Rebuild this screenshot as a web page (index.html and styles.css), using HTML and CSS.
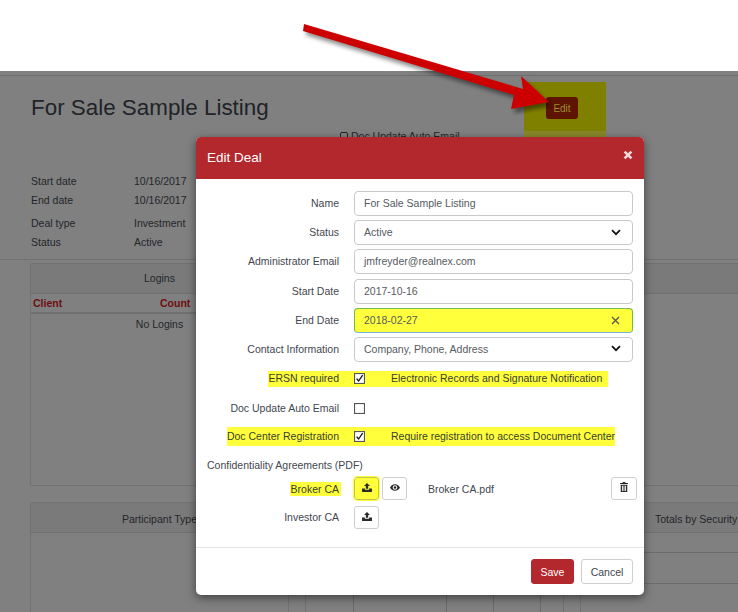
FILE: index.html
```html
<!DOCTYPE html>
<html lang="en">
<head>
<meta charset="utf-8">
<title>Edit Deal</title>
<link rel="stylesheet" href="styles.css">
</head>
<body>
<div class="topbar"></div>
<main class="page">
  <header class="head">
    <h1 class="title">For Sale Sample Listing</h1>
    <div class="auto-mail"><span class="mini-box"></span>Doc Update Auto Email</div>
  </header>
  <section class="meta">
    <div class="meta-group">
      <span>Start date</span><span>10/16/2017</span>
      <span>End date</span><span>10/16/2017</span>
    </div>
    <div class="meta-group">
      <span>Deal type</span><span>Investment</span>
      <span>Status</span><span>Active</span>
    </div>
  </section>
  <section class="panels panels-top">
    <article class="panel">
      <h2 class="panel-head">Logins</h2>
      <div class="table-head"><span>Client</span><span>Count</span></div>
      <p class="empty">No Logins</p>
    </article>
    <article class="panel"><div class="panel-head"></div></article>
    <article class="panel"><div class="panel-head"></div></article>
  </section>
  <section class="panels panels-bottom">
    <article class="panel"><h2 class="panel-head">Participant Type</h2></article>
    <article class="panel">
      <div class="panel-head"></div>
      <div class="rule-row"></div>
      <div class="rule-row rule-tall"></div>
      <div class="col-lines"><i></i><i></i><i></i><i></i></div>
    </article>
    <article class="panel">
      <h2 class="panel-head panel-head-left">Totals by Security</h2>
      <div class="rule-row"></div>
      <div class="rule-row rule-tall"></div>
    </article>
  </section>
</main>

<div class="edit-spot"><button class="edit-btn" type="button">Edit</button></div>

<svg class="arrow" viewBox="0 0 738 120" width="738" height="120" aria-hidden="true">
  <polygon points="304,24 303,31 514,95 511,109 549,102 521,76 523,89"/>
</svg>

<div class="modal" role="dialog" aria-label="Edit Deal">
  <div class="modal-head">
    <span class="modal-title">Edit Deal</span>
    <svg class="close" viewBox="0 0 10 10" width="10" height="10" aria-hidden="true"><path d="M1.6 1.6 8.4 8.4M8.4 1.6 1.6 8.4"/></svg>
  </div>
  <form class="modal-body">
    <div class="fields">
      <div class="row"><label class="lbl">Name</label><div class="field">For Sale Sample Listing</div></div>
      <div class="row"><label class="lbl">Status</label><div class="field">Active<svg class="chev" viewBox="0 0 10 7" width="10" height="7" aria-hidden="true"><path d="M1 1.2 5 5.2 9 1.2"/></svg></div></div>
      <div class="row"><label class="lbl">Administrator Email</label><div class="field">jmfreyder@realnex.com</div></div>
      <div class="row"><label class="lbl">Start Date</label><div class="field">2017-10-16</div></div>
      <div class="row"><label class="lbl">End Date</label><div class="field field-hot">2018-02-27<svg class="clear" viewBox="0 0 9 9" width="9" height="9" aria-hidden="true"><path d="M1 1 8 8M8 1 1 8"/></svg></div></div>
      <div class="row"><label class="lbl">Contact Information</label><div class="field">Company, Phone, Address<svg class="chev" viewBox="0 0 10 7" width="10" height="7" aria-hidden="true"><path d="M1 1.2 5 5.2 9 1.2"/></svg></div></div>
    </div>

    <div class="row check-row band-ersn">
      <label class="lbl lbl-band"><span class="mark">ERSN required</span></label>
      <div class="check-value">
        <svg class="box" viewBox="0 0 11 11" width="11" height="11" aria-hidden="true"><rect x=".5" y=".5" width="10" height="10"/><path d="M2.6 5.6 4.6 8 8.6 2.2"/></svg>
        <span class="check-text">Electronic Records and Signature Notification</span>
      </div>
    </div>
    <div class="row check-row plain">
      <label class="lbl">Doc Update Auto Email</label>
      <div class="check-value"><svg class="box box-empty" viewBox="0 0 11 11" width="11" height="11" aria-hidden="true"><rect x=".5" y=".5" width="10" height="10"/></svg></div>
    </div>
    <div class="row check-row band-center">
      <label class="lbl lbl-band"><span class="mark">Doc Center Registration</span></label>
      <div class="check-value">
        <svg class="box" viewBox="0 0 11 11" width="11" height="11" aria-hidden="true"><rect x=".5" y=".5" width="10" height="10"/><path d="M2.6 5.6 4.6 8 8.6 2.2"/></svg>
        <span class="check-text">Require registration to access Document Center</span>
      </div>
    </div>

    <div class="section-label">Confidentiality Agreements (PDF)</div>
    <div class="row file-row">
      <label class="lbl lbl-tight"><span class="mark mark-tight">Broker CA</span></label>
      <div class="file-value">
        <button class="icon-btn icon-hot" type="button"><svg class="glyph" viewBox="0 0 11 10" width="10" height="9" aria-hidden="true"><path d="M5.5 0 8.8 3.4H6.8V6.4H4.2V3.4H2.2Z"/><path d="M0 6H3.2V7.4H7.8V6H11V10H0Z"/></svg></button>
        <button class="icon-btn icon-eye" type="button"><svg class="glyph" viewBox="0 0 12 8" width="10" height="7" aria-hidden="true"><path fill-rule="evenodd" d="M6 0C9 0 11 2.2 12 4 11 5.8 9 8 6 8S1 5.8 0 4C1 2.2 3 0 6 0ZM6 1.2A2.8 2.8 0 1 0 6 6.8 2.8 2.8 0 1 0 6 1.2ZM6 2.4A1.6 1.6 0 1 1 6 5.6 1.6 1.6 0 1 1 6 2.4Z"/></svg></button>
        <span class="file-name">Broker CA.pdf</span>
        <button class="icon-btn icon-trash" type="button"><svg class="glyph" viewBox="0 0 9 11" width="8" height="10" aria-hidden="true"><path d="M3 0H6V1H9V2.2H0V1H3Z"/><path fill-rule="evenodd" d="M.8 3H8.2V11H.8ZM2.2 4V10H3.2V4ZM4 4V10H5V4ZM5.8 4V10H6.8V4Z"/></svg></button>
      </div>
    </div>
    <div class="row file-row">
      <label class="lbl lbl-investor">Investor CA</label>
      <div class="file-value">
        <button class="icon-btn" type="button"><svg class="glyph" viewBox="0 0 11 10" width="10" height="9" aria-hidden="true"><path d="M5.5 0 8.8 3.4H6.8V6.4H4.2V3.4H2.2Z"/><path d="M0 6H3.2V7.4H7.8V6H11V10H0Z"/></svg></button>
      </div>
    </div>
  </form>
  <div class="modal-foot">
    <button class="btn btn-save" type="button">Save</button>
    <button class="btn btn-cancel" type="button">Cancel</button>
  </div>
</div>
</body>
</html>
```

FILE: styles.css
```css
* { box-sizing: border-box; }

html, body {
  margin: 0;
  padding: 0;
}

body {
  position: relative;
  width: 738px;
  height: 612px;
  overflow: hidden;
  background: #fff;
  font-family: "Liberation Sans", Arial, sans-serif;
  font-size: 10.5px;
  color: #3f4750;
}

.topbar { height: 71px; background: #fff; }

.page {
  height: 541px;
  overflow: hidden;
  background: #808080;
  color: #23262a;
  padding-top: 4px;
}

.head {
  border-top: 1px solid #6f6f6f;
  height: 96px;
  padding: 19px 0 0 31px;
}

.title {
  margin: 0;
  font-size: 22.4px;
  line-height: 26px;
  font-weight: 400;
  color: #202328;
}

.auto-mail {
  display: flex;
  align-items: center;
  gap: 3px;
  margin: 9px 0 0 309px;
  line-height: 12px;
}

.mini-box {
  width: 8px;
  height: 8px;
  border: 1px solid #222;
  border-radius: 2px;
}

.meta {
  padding: 0 0 4px 31px;
}

.meta-group {
  display: grid;
  grid-template-columns: 103px 100px;
  grid-auto-rows: 19px;
  align-items: center;
  margin-bottom: 4px;
}

.panels {
  display: grid;
  grid-template-columns: repeat(3, 259px);
  column-gap: 16px;
  padding-left: 30px;
}

.panels-top {
  height: 227px;
  padding-top: 3px;
  border-top: 1px solid #707070;
}

.panels-bottom {
  height: 120px;
  margin-top: 16px;
}

.panel {
  border: 1px solid #727272;
  border-radius: 2px;
  min-width: 0;
}

.panels-bottom .panel { border-bottom: 0; }

.panel-head {
  margin: 0;
  height: 30px;
  line-height: 29px;
  text-align: center;
  font-size: 10.5px;
  font-weight: 400;
  background: #7a7a7a;
  border-bottom: 1px solid #707070;
  color: #23262a;
}

.panels-bottom .panel-head { line-height: 33px; }

.panels-bottom .panel-head-left {
  text-align: left;
  padding-left: 74px;
  white-space: nowrap;
}

.table-head {
  display: grid;
  grid-template-columns: 127px 30px;
  height: 20px;
  line-height: 19px;
  padding-left: 2px;
  font-weight: 700;
  color: #6d0f0f;
  border-bottom: 2px solid #707070;
}

.table-head span:last-child { text-align: right; }

.empty {
  margin: 4px 0 0;
  text-align: center;
  line-height: 13px;
}

.rule-row {
  height: 20px;
  border-bottom: 1px solid #6c6c6c;
}

.rule-tall { height: 31px; }

.col-lines {
  display: grid;
  grid-template-columns: 48px 93px 47px 47px;
  height: 40px;
}

.col-lines i { border-right: 1px solid #6c6c6c; }

.edit-spot {
  position: absolute;
  left: 524px;
  top: 82px;
  width: 82px;
  height: 56px;
  padding: 15px 0 0 22px;
  background: linear-gradient(#808000 49px, #88882a 49px);
}

.edit-btn {
  display: block;
  width: 32px;
  height: 22px;
  padding: 0;
  border: 0;
  border-radius: 3px;
  background: #5e1400;
  color: #9c8c34;
  font: 10px "Liberation Sans", Arial, sans-serif;
}

.arrow {
  position: absolute;
  left: 0;
  top: 0;
  filter: drop-shadow(3px 4px 2px rgba(0, 0, 0, .45));
}

.arrow polygon { fill: #cc0000; }

.modal {
  position: absolute;
  left: 196px;
  top: 137px;
  width: 448px;
  height: 458px;
  background: #fff;
  border-radius: 5px;
  box-shadow: 0 3px 10px rgba(0, 0, 0, .5);
  overflow: hidden;
}

.modal-head {
  display: flex;
  align-items: center;
  justify-content: space-between;
  height: 42px;
  padding: 0 11px;
  background: #b3282d;
  color: #fff;
}

.modal-title { font-size: 13.5px; line-height: 40px; }

.close {
  margin: -6px 0 0;
  fill: none;
  stroke: #f6d6d6;
  stroke-width: 2.6;
}

.modal-body { padding: 12px 11px 0; }

.fields {
  display: grid;
  grid-auto-rows: 25px;
  row-gap: 4.2px;
}

.row {
  display: grid;
  grid-template-columns: 147px minmax(0, 1fr);
  align-items: center;
}

.lbl {
  padding-right: 15px;
  padding-bottom: 1px;
  text-align: right;
  white-space: nowrap;
}

.lbl-band {
  padding: 0;
  height: 100%;
}

.lbl-tight {
  padding-right: 13px;
  padding-bottom: 0;
}

.lbl-investor { padding-bottom: 0; }

.field {
  display: flex;
  align-items: center;
  justify-content: space-between;
  height: 100%;
  padding: 0 11px 1px 9px;
  background: #fff;
  border: 1px solid #c9c9c9;
  border-radius: 4px;
  color: #555b62;
}

.field-hot {
  background: #ffff3c;
  border-color: #71b84f #71b84f #75b3dc;
  padding: 0 12px 0 9px;
}

.chev {
  fill: none;
  stroke: #111;
  stroke-width: 1.7;
}

.clear {
  fill: none;
  stroke: #555;
  stroke-width: 1.3;
}

.check-row { align-items: stretch; }

.mark {
  display: inline-block;
  height: 100%;
  padding-right: 15px;
  background: #ffff3c;
  color: #3b4030;
}

.check-value {
  display: flex;
  align-items: center;
  width: fit-content;
}

.band-ersn { height: 16px; margin-top: 9px; line-height: 15px; }
.band-ersn .check-value { background: #ffff3c; padding-right: 6px; }

.plain { height: 16px; margin-top: 14px; line-height: 15px; }

.band-center { height: 19px; margin-top: 10px; line-height: 18px; }
.band-center .check-value { background: #ffff3c; }

.box { flex: none; }

.box rect {
  fill: #fff;
  stroke: #555;
  stroke-width: 1.2;
}

.box path {
  fill: none;
  stroke: #111;
  stroke-width: 1.3;
}

.check-text {
  margin-left: 26px;
  color: #3b4030;
  white-space: nowrap;
}

.section-label {
  margin-top: 13px;
  height: 13px;
  line-height: 13px;
}

.file-row { margin-top: 6px; height: 23px; }
.section-label + .file-row { margin-top: 5px; }

.mark-tight {
  height: 14px;
  line-height: 14px;
  padding: 0 2px 0 1px;
}

.file-value {
  display: flex;
  align-items: flex-start;
  height: 100%;
}

.icon-btn {
  display: flex;
  align-items: center;
  justify-content: center;
  width: 25px;
  height: 23px;
  padding: 0 0 2px;
  background: #fff;
  border: 1px solid #cfcfcf;
  border-radius: 3px;
}

.icon-hot {
  background: #ffff3c;
  border-color: #c4c450;
  outline: 1px solid #ffff3c;
}

.icon-eye { margin-left: 3px; }

.icon-trash {
  margin: 0 -4px 0 auto;
  width: 26px;
}

.glyph { fill: #2a2a2a; }

.file-name {
  margin-left: 21px;
  line-height: 23px;
  padding-top: 1px;
}

.modal-foot {
  display: flex;
  justify-content: flex-end;
  gap: 7px;
  position: absolute;
  left: 0;
  right: 0;
  bottom: 0;
  height: 48px;
  padding: 11px 11px 0;
  border-top: 1px solid #e4e4e4;
}

.btn {
  height: 25px;
  padding: 0;
  border-radius: 3px;
  font: 10.5px "Liberation Sans", Arial, sans-serif;
}

.btn-save {
  width: 43px;
  background: #b3282d;
  border: 1px solid #b3282d;
  color: #fff;
}

.btn-cancel {
  width: 52px;
  background: #fff;
  border: 1px solid #cfcfcf;
  color: #3f4750;
}
```
